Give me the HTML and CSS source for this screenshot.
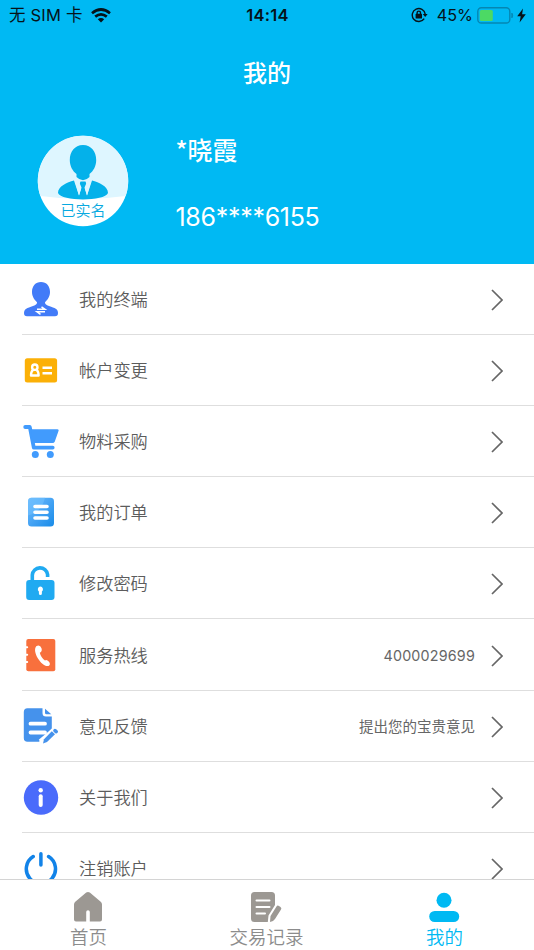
FILE: index.html
```
<!DOCTYPE html>
<html lang="zh-CN">
<head>
	<meta charset="UTF-8">
	<title>我的</title>
	<link rel="stylesheet" href="styles.css">
</head>
<body>
	<div id="header">
		<div class="status">
			<div class="carrier">
				<span>无 SIM 卡</span>
				<svg width="20" height="15" viewBox="0 0 20 15" fill="none" stroke="#061319" stroke-width="2.7">
					<path d="M1 5.2Q10 -2.2 19 5.2"/>
					<path d="M4.2 8.6Q10 4 15.8 8.6"/>
					<path d="M10 14.4L6.8 11.2Q10 8.7 13.2 11.2Z" fill="#061319" stroke="none"/>
				</svg>
			</div>
			<div class="time">14:14</div>
			<div class="power">
				<svg width="17" height="16" viewBox="0 0 17 16" fill="none" stroke="#061319" stroke-width="1.4">
					<path d="M13.2 11.6A6.5 6.5 0 1 1 14.2 7.2"/>
					<path d="M11.8 7H16.6L14.2 10Z" fill="#061319" stroke="none"/>
					<rect x="4.6" y="6.8" width="6.400" height="4.8" rx=".6" fill="#061319" stroke="none"/>
					<path d="M6.1 7.4V5.8a1.7 1.7 0 0 1 3.4 0V7.4"/>
				</svg>
				<span class="percent">45%</span>
				<svg width="37" height="17" viewBox="0 0 37 17">
					<rect x=".8" y=".8" width="32" height="15.2" rx="3.6" fill="none" stroke="#0586b2" stroke-width="1.4"/>
					<rect x="2.8" y="3" width="13" height="11" rx="1.5" fill="#4cd964"/>
					<path d="M34.9 6.2Q36.4 8.4 34.9 10.8Z" fill="#0586b2" stroke="#0586b2"/>
				</svg>
				<svg class="bolt" width="9" height="15" viewBox="0 0 9 15"><path d="M6 .5L.2 8.3H3.7L2.6 14.5L8.8 6.2H5.1Z" fill="#061319"/></svg>
			</div>
		</div>
		<h1>我的</h1>
		<div class="user">
			<svg class="avatar" width="92" height="92" viewBox="0 0 92 92">
				<circle cx="46" cy="46" r="45.2" fill="#fff"/>
				<path d="M3.4 61A45.2 45.2 0 1 1 88.6 61Q46 67 3.4 61Z" fill="#def6ff"/>
				<path d="M46 10C37.5 10 32.8 17 32.8 25C32.8 31 35.5 36 39.5 39V42Q46 48.5 52.5 42V39C56.5 36 59.2 31 59.2 25C59.2 17 54.5 10 46 10Z" fill="#04b1ea"/>
				<path d="M37 45.5C30 47.5 21 51 21 58C24 66.5 68 66.5 71 58C71 51 62 47.5 55 45.5L50 60.5L47.8 53.5L49.8 50L48.5 46.5H43.5L42.2 50L44.2 53.5L42 60.5Z" fill="#04b1ea"/>
				<path d="M37.5 45L42 60.5L44.5 52.5L41.5 45.5ZM54.5 45L50 60.5L47.5 52.5L50.5 45.5Z" fill="#def6ff"/>
				<path d="M44.4 54H47.6L49.5 63H42.5Z" fill="#04b1ea"/>
				<text x="46" y="80.5" text-anchor="middle">已实名</text>
			</svg>
			<div class="info">
				<div class="name">*晓霞</div>
				<div class="phone">186****6155</div>
			</div>
		</div>
	</div>

	<ul id="menu">
		<li>
			<svg class="icon" viewBox="0 0 36 36">
				<path d="M18 0C12.5 0 9 4 9 10C9 14.5 11.5 18 14 20.2Q14.5 22.5 10 24C4 26 1 27 1 31Q1 34.2 4 34.2H32Q35 34.2 35 31C35 27 32 26 26 24Q21.5 22.5 22 20.2C24.5 18 27 14.5 27 10C27 4 23.5 0 18 0Z" fill="#427bf8"/>
				<path d="M14 27.3H22L18.5 24.8M22 29.8H14L17.5 32.3" fill="none" stroke="#fff" stroke-width="1.5"/>
			</svg>
			<span class="label">我的终端</span>
			<svg class="arrow" viewBox="0 0 12 22"><path d="M1 1L11 11L1 21"/></svg>
		</li>
		<li>
			<svg class="icon" viewBox="0 0 36 36">
				<rect x="1.8" y="5.2" width="32.3" height="24.3" rx="2.5" fill="#fbb007"/>
				<g fill="none" stroke="#fff" stroke-width="2.4">
					<circle cx="11.8" cy="14.2" r="2.7"/>
					<path d="M9.8 17.2Q8 18.5 8 22.5H15.6Q15.6 18.5 13.8 17.2" stroke-linejoin="round"/>
					<path d="M19.5 14.8H29M19.5 20.3H29"/>
				</g>
			</svg>
			<span class="label">帐户变更</span>
			<svg class="arrow" viewBox="0 0 12 22"><path d="M1 1L11 11L1 21"/></svg>
		</li>
		<li>
			<svg class="icon" viewBox="0 0 36 36">
				<path d="M2.2 3H6.8L10.800 23.600H29.7" fill="none" stroke="#419bfd" stroke-width="3.8" stroke-linecap="round" stroke-linejoin="round"/>
				<path d="M8 5.2H34.5Q36 5.2 35.6 6.7L31.800 17.500Q31.200 19 29.5 19H10Z" fill="#419bfd"/>
				<circle cx="12.300" cy="30.500" r="3.5" fill="#419bfd"/>
				<circle cx="27.300" cy="30.500" r="3.5" fill="#419bfd"/>
			</svg>
			<span class="label">物料采购</span>
			<svg class="arrow" viewBox="0 0 12 22"><path d="M1 1L11 11L1 21"/></svg>
		</li>
		<li>
			<svg class="icon" viewBox="0 0 36 36">
				<defs>
					<linearGradient id="order" x1="0" y1="0" x2="1" y2="1">
						<stop offset="0" stop-color="#6dbcfb"/>
						<stop offset=".45" stop-color="#4aa6f5"/>
						<stop offset="1" stop-color="#188be8"/>
					</linearGradient>
				</defs>
				<rect x="5" y="2.8" width="26" height="28.8" rx="3.5" fill="url(#order)"/>
				<path d="M5 20.500V6.300Q5 2.800 8.500 2.800H22Q19 16.500 5 20.500Z" fill="#6fc0ff" opacity=".6"/>
				<path d="M12 11.5H24M12 17.300H24M12 23H24" stroke="#fff" stroke-width="3.6" stroke-linecap="round"/>
			</svg>
			<span class="label">我的订单</span>
			<svg class="arrow" viewBox="0 0 12 22"><path d="M1 1L11 11L1 21"/></svg>
		</li>
		<li>
			<svg class="icon" viewBox="0 0 36 36">
				<path d="M9.3 16V9A7.7 7.7 0 0 1 24.6 8.5V11" fill="none" stroke="#20aaf1" stroke-width="3.6"/>
				<rect x="3.2" y="14" width="28.3" height="20" rx="3" fill="#20aaf1"/>
				<path d="M17.4 20.5A2.8 2.8 0 0 0 15.9 25.5V27.5Q15.9 29 17.4 29Q18.9 29 18.9 27.5V25.5A2.8 2.8 0 0 0 17.4 20.5Z" fill="#fff"/>
			</svg>
			<span class="label">修改密码</span>
			<svg class="arrow" viewBox="0 0 12 22"><path d="M1 1L11 11L1 21"/></svg>
		</li>
		<li>
			<svg class="icon" viewBox="0 0 36 36">
				<rect x="3.3" y=".9" width="29" height="32.3" rx="2" fill="#f8703d"/>
				<path d="M3 9.3H4.2M3 16.7H4.2M3 24H4.2" stroke="#fff" stroke-width="2" stroke-linecap="round"/>
				<path d="M13.2 8.2Q17 6.2 18.5 10.2Q19.5 13.2 16.8 14.7Q18 19.7 22 22.5Q23.5 21 26 23.7Q28 26.5 25.5 27.9C19.5 29.7 8.5 14.2 13.2 8.2Z" fill="#fff"/>
			</svg>
			<span class="label">服务热线</span>
			<span class="tip number">4000029699</span>
			<svg class="arrow" viewBox="0 0 12 22"><path d="M1 1L11 11L1 21"/></svg>
		</li>
		<li>
			<svg class="icon" viewBox="0 0 36 36">
				<path d="M4.5 -.8H19.5V4Q19.5 7.5 23 7.5H28.8V19.5L16 32.8H4.5Q.8 32.8 .8 29V3Q.8 -.8 4.5 -.8Z" fill="#4592ec"/>
				<path d="M22 -.3L28.3 5.3H23.5Q22 5.3 22 3.8Z" fill="#4592ec"/>
				<path d="M7.5 14.7H22M7.5 23.5H22" stroke="#fff" stroke-width="3.8" stroke-linecap="round"/>
				<path d="M18 33.5L33.5 20.5" stroke="#fff" stroke-width="7"/>
				<path d="M20 34.4L21 30.3L28.8 22.3L32 25.3L24 33Z" fill="#4592ec"/>
				<path d="M32 21.6L33.2 22.6" stroke="#4592ec" stroke-width="3.6" stroke-linecap="round"/>
			</svg>
			<span class="label">意见反馈</span>
			<span class="tip">提出您的宝贵意见</span>
			<svg class="arrow" viewBox="0 0 12 22"><path d="M1 1L11 11L1 21"/></svg>
		</li>
		<li>
			<svg class="icon" viewBox="0 0 36 36">
				<circle cx="18" cy="17.5" r="17.2" fill="#4a6bfb"/>
				<circle cx="17.7" cy="10.2" r="2.2" fill="#fff"/>
				<path d="M17.7 16.3V25" stroke="#fff" stroke-width="4" stroke-linecap="round"/>
			</svg>
			<span class="label">关于我们</span>
			<svg class="arrow" viewBox="0 0 12 22"><path d="M1 1L11 11L1 21"/></svg>
		</li>
		<li>
			<svg class="icon" viewBox="0 0 36 36">
				<path d="M10.2 5.5A14.6 14.6 0 1 0 25.6 5.5M17.9 2.8V14" fill="none" stroke="#1283e8" stroke-width="3.5" stroke-linecap="round"/>
			</svg>
			<span class="label">注销账户</span>
			<svg class="arrow" viewBox="0 0 12 22"><path d="M1 1L11 11L1 21"/></svg>
		</li>
	</ul>

	<div id="tab">
		<div class="item">
			<svg width="34" height="32" viewBox="0 0 34 32">
				<path d="M15.2 1.6Q17 .2 18.8 1.6L30 11Q31 12 31 13.5V28.5Q31 30.5 29 30.5H18.8V21Q18.8 19.3 17 19.3Q15.2 19.3 15.2 21V30.5H5Q3 30.5 3 28.5V13.5Q3 12 4 11Z"/>
			</svg>
			<span>首页</span>
		</div>
		<div class="item">
			<svg width="34" height="32" viewBox="0 0 34 32">
				<path d="M5.5 1H22.5Q26 1 26 4.5V14L19.5 24.5L18.8 31H5.5Q2 31 2 27.5V4.5Q2 1 5.5 1Z"/>
				<path d="M7.5 9.5H20.5M7.5 16H20.5M7.5 22.5H16" stroke="#fff" stroke-width="2" stroke-linecap="round"/>
				<path d="M21 31L21.5 25L27.5 15.5Q28.5 14 30 15L31.5 16Q33 17 32 18.5L26 28Q24 31 21 31Z"/>
			</svg>
			<span>交易记录</span>
		</div>
		<div class="item selected">
			<svg width="34" height="32" viewBox="0 0 34 32">
				<circle cx="17" cy="9.2" r="7.5"/>
				<rect x="2.2" y="20" width="30" height="11" rx="5.5"/>
			</svg>
			<span>我的</span>
		</div>
	</div>
</body>
</html>
```

FILE: styles.css
```
*{
	margin: 0;
	padding: 0;
	box-sizing: border-box;
}
ul{
	list-style: none;
}
svg{
	display: block;
	flex: none;
}
body{
	display: flex;
	flex-direction: column;
	height: 950px;
	overflow: hidden;
	background: #fff;
	font-family: Inter, "Noto Sans CJK SC", sans-serif;
}
#header{
	flex: none;
	height: 263.5px;
	background: #00b9f3;
	color: #fff;
}
.status{
	display: grid;
	grid-template-columns: 1fr auto 1fr;
	align-items: center;
	height: 30px;
	padding: 0 8px 0 9px;
	color: #061319;
	font-size: 16.5px;
	line-height: 30px;
}
.carrier,
.power{
	display: flex;
	align-items: center;
}
.carrier{
	letter-spacing: .2px;
}
.carrier svg{
	margin-left: 8px;
}
.time{
	font-weight: 600;
	letter-spacing: .3px;
}
.power{
	justify-content: flex-end;
}
.percent{
	margin: 0 4px 0 9px;
	font-size: 16.2px;
}
.bolt{
	margin-left: 3px;
}
h1{
	height: 84px;
	padding-top: 2px;
	font-size: 24px;
	font-weight: 500;
	line-height: 84px;
	text-align: center;
}
.user{
	display: flex;
	padding: 21px 0 0 37px;
}
.avatar text{
	font-size: 15px;
	font-weight: 350;
	fill: #08a9e0;
}
.info{
	margin-left: 46.5px;
}
.name{
	height: 32px;
	font-family: "Noto Sans CJK SC", sans-serif;
	font-size: 25px;
	font-weight: 500;
	line-height: 29px;
}
.phone{
	margin-top: 34px;
	font-size: 25px;
	letter-spacing: -.3px;
	line-height: 32px;
}
#menu{
	flex: 1;
	min-height: 0;
	overflow: hidden;
	padding-left: 22px;
}
#menu li{
	display: flex;
	align-items: center;
	height: 71.2px;
	padding: 2px 31px 0 0;
	border-bottom: 1px solid #dedede;
}
.icon{
	width: 36px;
	height: 36px;
	margin-left: 1px;
	overflow: visible;
}
.label{
	flex: 1;
	margin: -3px 0 0 20px;
	color: #5c5c5c;
	font-size: 17.2px;
	font-weight: 350;
}
.tip{
	margin-top: -2px;
	color: #666;
	font-size: 14.5px;
}
.number{
	margin-top: -1px;
	font-size: 14.3px;
	letter-spacing: .2px;
}
.arrow{
	width: 12px;
	height: 22px;
	margin-left: 16px;
	fill: none;
	stroke: #666;
	stroke-width: 1.7;
}
#tab{
	display: flex;
	flex: none;
	height: 71px;
	border-top: 1px solid #d4d4d4;
	background: #fff;
}
.item{
	display: flex;
	flex: 1;
	flex-direction: column;
	align-items: center;
	padding: 11px 1px 0 0;
	color: #8c8c8c;
	font-size: 18.5px;
	font-weight: 350;
	line-height: 29px;
}
.item svg{
	margin-right: 1px;
	fill: #9c9893;
}
.item.selected{
	color: #00b9f3;
}
.item.selected svg{
	fill: #00b9f3;
}
```
